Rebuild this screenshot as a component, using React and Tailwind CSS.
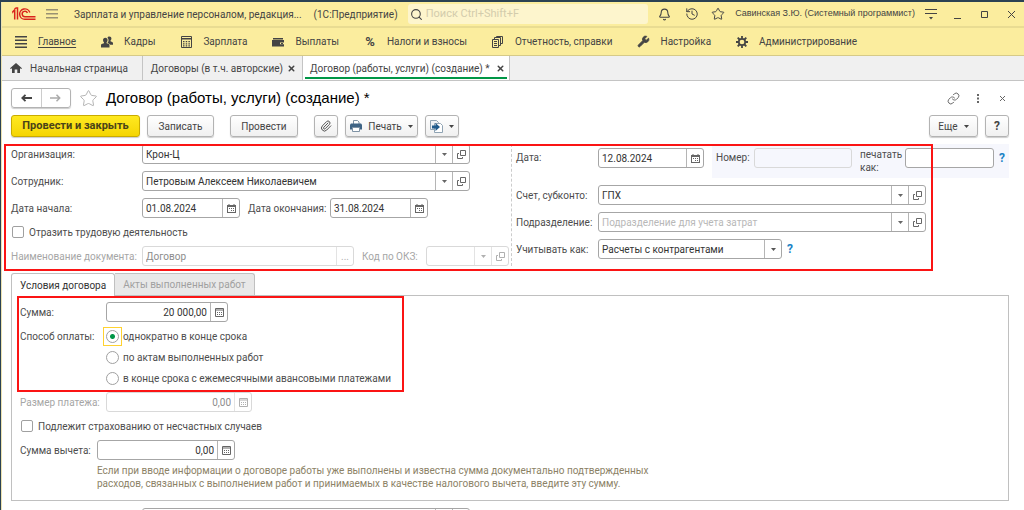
import React from "react";
import { Bell, History, Star, Search, Link, Paperclip, Wrench, X } from "lucide-react";

const ArrowDown = () => (
  <svg width="5" height="3" viewBox="0 0 5 3" fill="currentColor" aria-hidden="true">
    <path d="M0 0h5L2.5 3z" />
  </svg>
);

const OpenIcon = () => (
  <svg width="9" height="9" viewBox="0 0 9 9" fill="none" stroke="currentColor" aria-hidden="true">
    <path d="M3.5.5h5v5h-5zM2 3.5H.5v5h5V7" />
  </svg>
);

const CalendarIcon = () => (
  <svg width="9" height="9" viewBox="0 0 9 9" aria-hidden="true">
    <path d="M1.5 0h1v1h4V0h1v1H9v8H0V1h1.5z" fill="currentColor" />
    <path d="M1 3h7v5H1z" fill="#fff" />
    <path d="M2 4h1v1H2zM4 4h1v1H4zM6 4h1v1H6zM4 6h1v1H4zM6 6h1v1H6z" fill="currentColor" />
  </svg>
);

const CalcIcon = () => (
  <svg width="9" height="9" viewBox="0 0 9 9" aria-hidden="true">
    <path d="M.5.5h8v8h-8z" fill="none" stroke="currentColor" />
    <path d="M1 1.5h7v1H1zM2 4h1v1H2zM4 4h1v1H4zM6 4h1v1H6zM2 6h1v1H2zM4 6h1v1H4zM6 6h1v1H6z" fill="currentColor" />
  </svg>
);

const Logo = () => (
  <svg width="24" height="14" viewBox="0 0 24 14" fill="none" stroke="#d9251d" strokeWidth="1.5" role="img" aria-label="1C">
    <path d="M.4 5.2 2.700 2.800V12.500M1 6 .4 5.200M2.500 1.800 4.200.9H5.500V12.500" />
    <path d="M17.800 5.500A5.200 5.200 0 1 0 13 12.300h10.500" />
    <path d="M15.400 6a2.700 2.700 0 1 0-2.400 3.700h10.500" />
  </svg>
);

const Bars = ({ rows, className }) => (
  <svg width="12" height="12" viewBox="0 0 12 12" fill="currentColor" className={className} aria-hidden="true">
    {rows.map((y) => (
      <rect key={y} x="0" y={y} width="12" height="1.500" />
    ))}
  </svg>
);

const PeopleIcon = () => (
  <svg width="13" height="12" viewBox="0 0 13 12" fill="currentColor" aria-hidden="true">
    <path d="M9 0c1.500 0 2.300 1 2.300 2.300 0 1-.4 1.700-1 2.200v.8l2.200 1c.4.200.5.600.5 1V9H9.800c-.2-.8-.7-1.200-1.500-1.500L7 7c.9-.9 1.300-2 1.200-3.200C8.100 2.600 7.600 1.800 7 1.300 7.400.4 8.100 0 9 0z" />
    <path d="M4.700 1.500c1.600 0 2.400 1 2.400 2.500 0 1-.4 1.800-1 2.300v1l2.400 1c.5.200.7.600.7 1.200V12H0V9.500c0-.6.200-1 .7-1.200l2.500-1v-1c-.6-.5-1-1.300-1-2.300 0-1.500.9-2.500 2.500-2.500z" />
  </svg>
);

const AbacusIcon = () => (
  <svg width="11" height="12" viewBox="0 0 11 12" aria-hidden="true">
    <path d="M.5.5h10v11H.5z" fill="none" stroke="currentColor" />
    <path d="M1 2h9v1.500H1z" fill="currentColor" />
    <path d="M2 5h1.500v1.200H2zM4.700 5h1.500v1.200H4.700zM7.400 5h1.500v1.200H7.400zM2 7.200h1.500v1.200H2zM4.700 7.200h1.500v1.200H4.700zM7.400 7.200h1.500v1.200H7.400zM2 9.300h1.500v1.200H2zM4.700 9.300h1.500v1.200H4.700zM7.400 9.300h1.500v1.200H7.400z" fill="currentColor" />
  </svg>
);

const WalletIcon = () => (
  <svg width="12" height="10" viewBox="0 0 12 10" fill="currentColor" aria-hidden="true">
    <path d="M1 1h10v1.500H1zM0 3h12v2.500H8v1.800h4V9.500H0z" />
    <path d="M9 6h2v1H9z" />
  </svg>
);

const ReportIcon = () => (
  <svg width="11" height="12" viewBox="0 0 11 12" fill="none" stroke="currentColor" aria-hidden="true">
    <path d="M.5 3.500h6v8h-6zM2.500 3V1.500h6v8H7M4.500 1V.5h6v7H9" />
    <path d="M2 5.500h3M2 7.500h3M2 9.500h3" />
  </svg>
);

const GearIcon = () => (
  <svg width="12" height="12" viewBox="0 0 12 12" fill="none" stroke="currentColor" aria-hidden="true">
    <circle cx="6" cy="6" r="3.200" strokeWidth="1.700" />
    <path d="M6 0v2.500M6 9.500V12M0 6h2.500M9.500 6H12M1.700 1.700l1.800 1.800M8.500 8.500l1.800 1.800M10.300 1.700 8.500 3.500M3.500 8.500l-1.800 1.800" strokeWidth="1.800" />
  </svg>
);

const HomeIcon = () => (
  <svg width="12" height="10" viewBox="0 0 12 10" fill="currentColor" aria-hidden="true">
    <path d="M6 0l6 5.200-.8.900L10 5.200V10H7.300V6.500H4.700V10H2V5.200L.8 6.100 0 5.200z" />
  </svg>
);

const PrinterIcon = () => (
  <svg width="12" height="12" viewBox="0 0 12 12" className="shrink-0" aria-hidden="true">
    <path d="M3.500 4V.5h4l1.500 1.500v2" fill="#fff" stroke="#7f93a5" />
    <path d="M1 3.500h10l1 1V9.500H0V4.500z" fill="#3f6485" />
    <path d="M2.500 7.500h7v4h-7z" fill="#fff" stroke="#7f93a5" />
  </svg>
);

const CreateFromIcon = () => (
  <svg width="13" height="13" viewBox="0 0 13 13" className="shrink-0" aria-hidden="true">
    <path d="M.5.5h6L8.500 2.500v7h-8z" fill="#eef1f4" stroke="#8fa3b3" />
    <path d="M4.500 3.500h6l2 2v7h-8z" fill="#fff" stroke="#8fa3b3" />
    <path d="M2 5.500h3.500V3L10 7l-4.500 4V8.500H2z" fill="#1f5a8c" />
  </svg>
);

const names = { list: "Показать список", open: "Открыть", date: "Календарь", calc: "Калькулятор", more: "Выбрать" };

function Field({ id, value, placeholder, disabled, align, icons = [], className, label }) {
  return (
    <div
      className={`flex h-5 shrink-0 rounded-[3px] border ${disabled ? "border-[#d9d9d9] text-[#8c8c8c]" : "border-[#a6a6a6] bg-white text-[#333]"} ${className}`}
    >
      <input
        id={id}
        aria-label={label}
        defaultValue={value}
        placeholder={placeholder}
        disabled={disabled}
        className={`min-w-0 flex-1 bg-transparent px-[3px] outline-none placeholder:text-[#b8b8b8] ${align === "right" ? "text-right" : ""}`}
      />
      {icons.map((icon) => (
        <button
          key={icon}
          type="button"
          disabled={disabled}
          aria-label={names[icon]}
          className={`flex w-[17px] shrink-0 items-center justify-center border-l ${disabled ? "border-[#e3e3e3] text-[#b0b0b0]" : "border-[#b5b5b5] text-[#666]"}`}
        >
          {icon === "list" && <ArrowDown />}
          {icon === "open" && <OpenIcon />}
          {icon === "date" && <CalendarIcon />}
          {icon === "calc" && <CalcIcon />}
          {icon === "more" && <span>...</span>}
        </button>
      ))}
    </div>
  );
}

const Label = ({ htmlFor, children, className = "", disabled }) => (
  <label htmlFor={htmlFor} className={`shrink-0 whitespace-nowrap ${disabled ? "text-[#a6a6a6]" : ""} ${className}`}>
    {children}
  </label>
);

const Check = ({ children }) => (
  <label className="flex h-3.5 items-center gap-[5px]">
    <input type="checkbox" className="ml-px size-3 appearance-none rounded-[2px] border border-[#a0a0a0] bg-white checked:bg-[#009646]" />
    {children}
  </label>
);

const Radio = ({ children, checked }) => (
  <label className="flex h-[21px] items-center gap-px">
    <span className={`flex size-[19px] items-center justify-center border ${checked ? "border-amber-300" : "border-transparent"}`}>
      <input
        type="radio"
        name="payment"
        defaultChecked={checked}
        className="size-[13px] appearance-none rounded-full border border-[#a0a0a0] bg-white checked:bg-[radial-gradient(circle,#009646_2px,#fff_3px)]"
      />
    </span>
    {children}
  </label>
);

const Btn = ({ children, className, primary, ...rest }) => (
  <button
    type="button"
    className={`flex h-[22px] shrink-0 items-center justify-center rounded-[3px] border shadow-[0_1px_1px_#ccc] ${primary ? "border-[#c9ab00] bg-linear-to-b from-[#ffe91f] to-[#f5d500] text-[11px] text-[#4a4318]" : "border-[#b3b3b3] bg-linear-to-b from-white to-[#f0f0f0] text-[#444]"} ${className}`}
    {...rest}
  >
    {children}
  </button>
);

const menu = [
  ["Главное", <Bars rows={[0, 3.5, 7, 10.5]} />],
  ["Кадры", <PeopleIcon />],
  ["Зарплата", <AbacusIcon />],
  ["Выплаты", <WalletIcon />],
  ["Налоги и взносы", <span className="text-[13px] font-bold">%</span>],
  ["Отчетность, справки", <ReportIcon />],
  ["Настройка", <Wrench size={13} fill="currentColor" strokeWidth={1.5} className="shrink-0" />],
  ["Администрирование", <GearIcon />],
];

function TitleBar() {
  return (
    <header className="flex h-[26px] shrink-0 items-center border-b-2 border-[#e9dc92] bg-[#fbed9e] pr-2 pl-2.5 text-[#444]">
      <Logo />
      <button type="button" aria-label="Меню" className="ml-2.5 text-[#999172]">
        <Bars rows={[1, 5, 9]} />
      </button>
      <span className="ml-4 whitespace-nowrap">Зарплата и управление персоналом, редакция...</span>
      <span className="ml-3 whitespace-nowrap">(1С:Предприятие)</span>
      <label className="ml-2.5 flex h-5 max-w-[240px] min-w-0 flex-1 items-center gap-[3px] rounded-[3px] bg-[#fdf5cd] px-[2px]">
        <Search size={13} strokeWidth={2} className="shrink-0" />
        <input aria-label="Поиск" placeholder="Поиск Ctrl+Shift+F" className="min-w-0 flex-1 bg-transparent text-[11px] outline-none placeholder:text-[#d3ccac]" />
      </label>
      <div className="ml-auto flex items-center">
        <button type="button" aria-label="Уведомления"><Bell size={13} strokeWidth={2} /></button>
        <button type="button" aria-label="История" className="ml-3.5"><History size={14} strokeWidth={1.7} /></button>
        <button type="button" aria-label="Избранное" className="ml-3"><Star size={14} strokeWidth={1.7} /></button>
        <span className="ml-2.5 font-['Liberation_Sans'] text-[9px] whitespace-nowrap">Савинская З.Ю. (Системный программист)</span>
        <button type="button" aria-label="Настройки окна" className="ml-2.5">
          <svg width="12" height="11" viewBox="0 0 12 11" fill="currentColor">
            <path d="M0 0h12v1H0zM0 4h12v1H0zM4 8h4l-2 2.500z" />
          </svg>
        </button>
        <button type="button" aria-label="Свернуть" className="ml-4">
          <svg width="9" height="9" viewBox="0 0 9 9"><path d="M1 8.500h7" stroke="currentColor" /></svg>
        </button>
        <button type="button" aria-label="Развернуть" className="ml-[18px]">
          <svg width="9" height="9" viewBox="0 0 9 9" fill="none"><path d="M1.500 1.500h6v6h-6z" stroke="currentColor" /></svg>
        </button>
        <button type="button" aria-label="Закрыть окно" className="ml-[18px]">
          <svg width="9" height="9" viewBox="0 0 9 9"><path d="M1 1l7 7M8 1L1 8" stroke="currentColor" /></svg>
        </button>
      </div>
    </header>
  );
}

function Conditions() {
  return (
    <section className="relative border border-[#c0c0c0] px-2 pt-1.5 pb-2.5">
      <div className="flex items-center">
        <Label htmlFor="sum" className="w-[86px]">Сумма:</Label>
        <Field id="sum" value="20 000,00" align="right" icons={["calc"]} className="w-[122px]" />
      </div>
      <fieldset className="mt-1 flex">
        <legend className="float-left w-[83px] leading-[21px] whitespace-nowrap">Способ оплаты:</legend>
        <div>
          <Radio checked>однократно в конце срока</Radio>
          <Radio>по актам выполненных работ</Radio>
          <Radio>в конце срока с ежемесячными авансовыми платежами</Radio>
        </div>
      </fieldset>
      <div className="mt-[3px] flex items-center">
        <Label htmlFor="payment-size" disabled className="w-[86px]">Размер платежа:</Label>
        <Field id="payment-size" value="0,00" align="right" disabled icons={["calc"]} className="w-[146px]" />
      </div>
      <div className="mt-[7px]">
        <Check>Подлежит страхованию от несчастных случаев</Check>
      </div>
      <div className="mt-[7px] flex items-center">
        <Label htmlFor="deduction" className="w-[77px]">Сумма вычета:</Label>
        <Field id="deduction" value="0,00" align="right" icons={["calc"]} className="w-[138px]" />
      </div>
      <p className="mt-1 ml-[77px] max-w-[580px] leading-[13px] text-[#8c8266]">
        Если при вводе информации о договоре работы уже выполнены и известна сумма документально подтвержденных
        расходов, связанных с выполнением работ и принимаемых в качестве налогового вычета, введите эту сумму.
      </p>
      <div className="pointer-events-none absolute top-0 left-[5px] h-24 w-[387px] border-2 border-[#fb1414]" />
    </section>
  );
}

export default function App() {
  return (
    <div className="flex h-screen flex-col overflow-hidden border-t-2 border-l border-[#2b4253] bg-white font-['Roboto','Liberation_Sans',sans-serif] text-[10px] text-[#4d4d4d]">
      <div className="flex flex-1 flex-col border-l border-[#ece2b0]">
        <TitleBar />
        <nav className="flex h-7 shrink-0 items-center gap-[25px] border-b border-[#d6ca88] bg-[#fbed9e] pl-[13px] whitespace-nowrap text-[#444]">
          {menu.map(([name, icon], i) => (
            <a key={name} href="#" className="flex items-center gap-[11px]">
              <span className="flex w-3 shrink-0 justify-center">{icon}</span>
              <span className={i === 0 ? "underline underline-offset-2" : ""}>{name}</span>
            </a>
          ))}
        </nav>
        <nav className="flex h-[25px] shrink-0 border-b border-[#c4c4c4] bg-[#f0f0f0] whitespace-nowrap text-[#444]">
          <a href="#" className="flex items-center gap-2 border-r border-[#c4c4c4] pr-3.5 pl-2"><HomeIcon />Начальная страница</a>
          <div className="flex items-center gap-1 border-r border-[#c4c4c4] pr-1.5 pl-2">
            <a href="#">Договоры (в т.ч. авторские)</a>
            <button type="button" aria-label="Закрыть"><X size={9} strokeWidth={4} /></button>
          </div>
          <div className="flex border-r border-[#c4c4c4] bg-white px-0.5">
            <div className="mb-px flex items-center gap-1.5 border-b-2 border-[#009646] pt-[3px] pr-0.5 pl-[5px]">
              <a href="#">Договор (работы, услуги) (создание) *</a>
              <button type="button" aria-label="Закрыть"><X size={9} strokeWidth={4} /></button>
            </div>
          </div>
        </nav>

        <main className="flex flex-col gap-[7px] pt-[7px] pr-[15px] pl-[9px]">
          <div className="flex h-5 items-center">
            <div className="flex h-5 w-[60px] shrink-0 rounded-[3px] border border-[#b3b3b3] shadow-[0_1px_1px_#ccc]">
              <button type="button" aria-label="Назад" className="flex flex-1 items-center justify-center border-r border-[#ccc] text-[#444]">
                <svg width="11" height="8" viewBox="0 0 11 8" fill="none" stroke="currentColor" strokeWidth="1.800"><path d="M11 4H1.500M4.500 .8L1.300 4l3.200 3.200" /></svg>
              </button>
              <button type="button" aria-label="Вперед" className="flex flex-1 items-center justify-center text-[#aaa]">
                <svg width="11" height="8" viewBox="0 0 11 8" fill="none" stroke="currentColor" strokeWidth="1.500"><path d="M0 4h9.500M6.500 .8L9.700 4 6.500 7.200" /></svg>
              </button>
            </div>
            <button type="button" aria-label="В избранное" className="ml-2 text-[#b0b0b0]"><Star size={19} strokeWidth={1.2} /></button>
            <h1 className="ml-2 font-['Liberation_Sans'] text-[15px] whitespace-nowrap text-black">Договор (работы, услуги) (создание) *</h1>
            <div className="ml-auto flex items-center text-[#666]">
              <button type="button" aria-label="Получить ссылку"><Link size={13} strokeWidth={1.8} /></button>
              <button type="button" aria-label="Еще действия" className="ml-4">
                <svg width="4" height="9" viewBox="0 0 4 9" fill="currentColor"><path d="M1 0h2v2H1zM1 3.500h2v2H1zM1 7h2v2H1z" /></svg>
              </button>
              <button type="button" aria-label="Закрыть форму" className="mr-[3px] ml-[19px]">
                <svg width="7" height="7" viewBox="0 0 7 7"><path d="M1 1l5 5M6 1L1 6" stroke="currentColor" /></svg>
              </button>
            </div>
          </div>

          <div className="flex">
            <Btn primary className="w-[129px] font-bold">Провести и закрыть</Btn>
            <Btn className="ml-[7px] w-[67px]">Записать</Btn>
            <Btn className="ml-4 w-[68px]">Провести</Btn>
            <Btn className="ml-4 w-6" aria-label="Файлы">
              <Paperclip size={12} strokeWidth={1.8} />
            </Btn>
            <Btn className="ml-[7px] w-[73px] gap-1.5"><PrinterIcon />Печать<ArrowDown /></Btn>
            <Btn className="ml-[7px] w-[34px] gap-1.5" aria-label="Создать на основании"><CreateFromIcon /><ArrowDown /></Btn>
            <Btn className="ml-auto w-[49px] gap-1.5">Еще<ArrowDown /></Btn>
            <Btn className="ml-[7px] w-6 font-bold" aria-label="Справка"><span className="text-xs">?</span></Btn>
          </div>

          <div className="relative flex">
            <div className="flex w-[500px] shrink-0 flex-col gap-[7px]">
              <div className="flex items-center">
                <Label htmlFor="org" className="w-[131px]">Организация:</Label>
                <Field id="org" value="Крон-Ц" icons={["list", "open"]} className="w-[328px]" />
              </div>
              <div className="flex items-center">
                <Label htmlFor="person" className="w-[131px]">Сотрудник:</Label>
                <Field id="person" value="Петровым Алексеем Николаевичем" icons={["list", "open"]} className="w-[328px]" />
              </div>
              <div className="flex items-center">
                <Label htmlFor="start" className="w-[131px]">Дата начала:</Label>
                <Field id="start" value="01.08.2024" icons={["date"]} className="w-[98px]" />
                <Label htmlFor="end" className="ml-2 w-[82px]">Дата окончания:</Label>
                <Field id="end" value="31.08.2024" icons={["date"]} className="w-[98px]" />
              </div>
              <Check>Отразить трудовую деятельность</Check>
              <div className="flex items-center">
                <Label htmlFor="doc" disabled className="w-[131px]">Наименование документа:</Label>
                <Field id="doc" value="Договор" disabled icons={["more"]} className="w-[212px]" />
                <Label htmlFor="okz" disabled className="ml-2 w-[64px]">Код по ОКЗ:</Label>
                <Field id="okz" disabled icons={["list", "open"]} className="w-[83px]" />
              </div>
            </div>

            <div className="flex flex-1 flex-col gap-[7px] border-l border-dashed border-[#ccc] pl-1">
              <div className="flex h-[34px] items-start">
                <Label htmlFor="date" className="mt-1 w-[82px] leading-5">Дата:</Label>
                <Field id="date" value="12.08.2024" icons={["date"]} className="mt-1 w-[106px]" />
                <div className="ml-2 flex h-[34px] flex-1 items-start bg-[#f6f7fd] pt-1 pl-1">
                  <Label htmlFor="number" className="w-[38px] leading-5">Номер:</Label>
                  <Field id="number" disabled className="w-[98px]" />
                  <label htmlFor="print-as" className="ml-2 w-[45px] leading-[13px]">печатать как:</label>
                  <Field id="print-as" className="w-[89px]" />
                  <button type="button" aria-label="Подсказка" className="ml-[5px] text-xs leading-5 font-bold text-[#1b82c5]">?</button>
                </div>
              </div>
              <div className="flex items-center">
                <Label htmlFor="account" className="w-[82px]">Счет, субконто:</Label>
                <Field id="account" value="ГПХ" icons={["list", "open"]} className="w-[328px]" />
              </div>
              <div className="flex items-center">
                <Label htmlFor="department" className="w-[82px]">Подразделение:</Label>
                <Field id="department" placeholder="Подразделение для учета затрат" icons={["list", "open"]} className="w-[328px]" />
              </div>
              <div className="flex items-center">
                <Label htmlFor="account-as" className="w-[82px]">Учитывать как:</Label>
                <div className="flex h-5 w-[184px] rounded-[3px] border border-[#a6a6a6] text-[#333]">
                  <select id="account-as" className="min-w-0 flex-1 appearance-none bg-transparent px-[3px] outline-none">
                    <option>Расчеты с контрагентами</option>
                  </select>
                  <span className="pointer-events-none flex w-[17px] items-center justify-center border-l border-[#b5b5b5] text-[#555]"><ArrowDown /></span>
                </div>
                <button type="button" aria-label="Подсказка" className="ml-[5px] text-xs font-bold text-[#1b82c5]">?</button>
              </div>
            </div>
            <div className="pointer-events-none absolute top-0 -left-[7px] h-[127px] w-[929px] border-2 border-[#fb1414]" />
          </div>

          <div>
            <div role="tablist" className="flex h-[22px]">
              <button type="button" role="tab" aria-selected="true" className="relative z-10 -mb-px rounded-t-[3px] border border-b-0 border-[#c0c0c0] bg-white px-2 text-[#333]">Условия договора</button>
              <button type="button" role="tab" aria-selected="false" className="rounded-tr-[3px] border border-b-0 border-l-0 border-[#c0c0c0] bg-[#e8e8e8] px-2 text-[#a0a0a0]">Акты выполненных работ</button>
            </div>
            <Conditions />
          </div>
          <Field label="Комментарий" icons={["list", "open"]} className="ml-[131px] w-[328px]" />
        </main>
      </div>
    </div>
  );
}
